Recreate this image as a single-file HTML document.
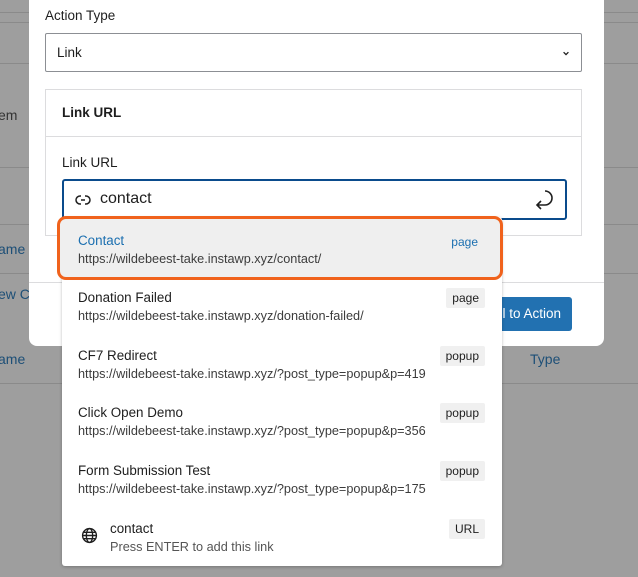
<!DOCTYPE html>
<html><head><style>
*{box-sizing:border-box;margin:0;padding:0}
body{width:638px;height:577px;overflow:hidden;background:#9e9e9e;font-family:"Liberation Sans",sans-serif;position:relative}
.ab{position:absolute}
.ln{position:absolute;height:1px;background:#8a8a8a;left:0;width:638px}
.bg{color:#1d4f77;font-size:14px}
.modal{left:29px;top:-10px;width:575px;height:356px;background:#fff;border-radius:8px}
.item{position:absolute;left:0;width:440px;height:58px}
.t{position:absolute;left:16px;top:14px;font-size:13.4px;color:#1e1e1e}
.u{position:absolute;left:16px;top:33px;font-size:12.7px;color:#3c3c3c}
.badge{position:absolute;right:17px;top:12px;background:#f0f0f0;font-size:12px;color:#1e1e1e;padding:3px 6px;border-radius:2px}
</style></head><body>
<div class="ln" style="top:12px"></div>
<div class="ln" style="top:22px"></div>
<div class="ln" style="top:63px"></div>
<div class="ln" style="top:167px"></div>
<div class="ln" style="top:224px"></div>
<div class="ln" style="top:273px"></div>
<div class="ln" style="top:383px"></div>
<div class="ab bg" style="left:-2px;top:107px;color:#333">em</div>
<div class="ab bg" style="left:-2px;top:241px">ame</div>
<div class="ab bg" style="left:-2px;top:286px">ew C</div>
<div class="ab bg" style="left:-2px;top:351px">ame</div>
<div class="ab bg" style="left:530px;top:351px">Type</div>

<div class="ab modal">
  <div class="ab" style="left:16px;top:18px;font-size:13.5px;color:#1e1e1e">Action Type</div>
  <div class="ab" style="left:16px;top:43px;width:537px;height:39px;border:1px solid #8c8f94;border-radius:2px">
    <span class="ab" style="left:11px;top:11px;font-size:13.5px;color:#1e1e1e">Link</span>
    <svg class="ab" style="right:11px;top:15px" width="8" height="8" viewBox="0 0 10 10"><path d="M2 4l3 3 3-3" fill="none" stroke="#1e1e1e" stroke-width="1.6"/></svg>
  </div>
  <div class="ab" style="left:16px;top:99px;width:537px;height:147px;border:1px solid #dcdcde">
    <div class="ab" style="left:16px;top:15px;font-size:13.5px;font-weight:bold;color:#1e1e1e">Link URL</div>
    <div class="ab" style="left:0;top:46px;width:535px;height:1px;background:#dcdcde"></div>
    <div class="ab" style="left:16px;top:65px;font-size:13.5px;color:#1e1e1e">Link URL</div>
    <div class="ab" style="left:16px;top:89px;width:505px;height:41px;border:2px solid #0a4b8c;border-radius:3px">
      <svg class="ab" style="left:11px;top:11px" width="16" height="16" viewBox="0 0 16 16"><path d="M6 4H5a4 4 0 0 0 0 8h1M10 4h1a4 4 0 0 1 0 8h-1M6 8h4" fill="none" stroke="#1e1e1e" stroke-width="1.5"/></svg>
      <span class="ab" style="left:36px;top:9px;font-size:16px;color:#1e1e1e">contact</span>
      <svg class="ab" style="right:8px;top:6px" width="24" height="26" viewBox="0 0 24 26"><path d="M12 4a7 7 0 0 1 0 14H4M8 14l-4 4 4 4" fill="none" stroke="#1e1e1e" stroke-width="1.6"/></svg>
    </div>
  </div>
  <div class="ab" style="left:0;top:292px;width:575px;height:1px;background:#dcdcde"></div>
  <div class="ab" style="left:449px;top:307px;width:94px;height:34px;background:#2271b1;border-radius:3px;color:#fff;font-size:13.5px;padding:9px 11px 0 0;white-space:nowrap;text-align:right;overflow:hidden">Call to Action</div>
</div>

<div class="ab" style="left:62px;top:217px;width:440px;height:349px;background:#fff;border-radius:3px;box-shadow:0 1px 3px rgba(0,0,0,.25)">
  <div class="item" style="top:59px"><div class="t">Donation Failed</div><div class="u">https://wildebeest-take.instawp.xyz/donation-failed/</div><div class="badge">page</div></div>
  <div class="item" style="top:117px"><div class="t">CF7 Redirect</div><div class="u">https://wildebeest-take.instawp.xyz/?post_type=popup&amp;p=419</div><div class="badge">popup</div></div>
  <div class="item" style="top:174px"><div class="t">Click Open Demo</div><div class="u">https://wildebeest-take.instawp.xyz/?post_type=popup&amp;p=356</div><div class="badge">popup</div></div>
  <div class="item" style="top:232px"><div class="t">Form Submission Test</div><div class="u">https://wildebeest-take.instawp.xyz/?post_type=popup&amp;p=175</div><div class="badge">popup</div></div>
  <div class="item" style="top:290px">
    <svg class="ab" style="left:19px;top:20px" width="17" height="17" viewBox="0 0 16 16"><g fill="none" stroke="#1e1e1e" stroke-width="1.3"><circle cx="8" cy="8" r="6.5"/><ellipse cx="8" cy="8" rx="3" ry="6.5"/><path d="M1.5 8h13M2.5 5h11M2.5 11h11"/></g></svg>
    <div class="t" style="left:48px">contact</div><div class="u" style="left:48px;color:#555">Press ENTER to add this link</div><div class="badge">URL</div></div>
</div>
<div class="ab" style="left:57px;top:216px;width:446px;height:64px;border:3px solid #f0621c;border-radius:9px;background:#efefef">
  <div class="ab" style="left:18px;top:14px;font-size:13.4px;color:#1b6fb0">Contact</div>
  <div class="ab" style="left:18px;top:33px;font-size:12.7px;color:#3c3c3c">https://wildebeest-take.instawp.xyz/contact/</div>
  <div class="ab" style="right:22px;top:16px;font-size:12px;color:#1b6fb0">page</div>
</div>
</body></html>
